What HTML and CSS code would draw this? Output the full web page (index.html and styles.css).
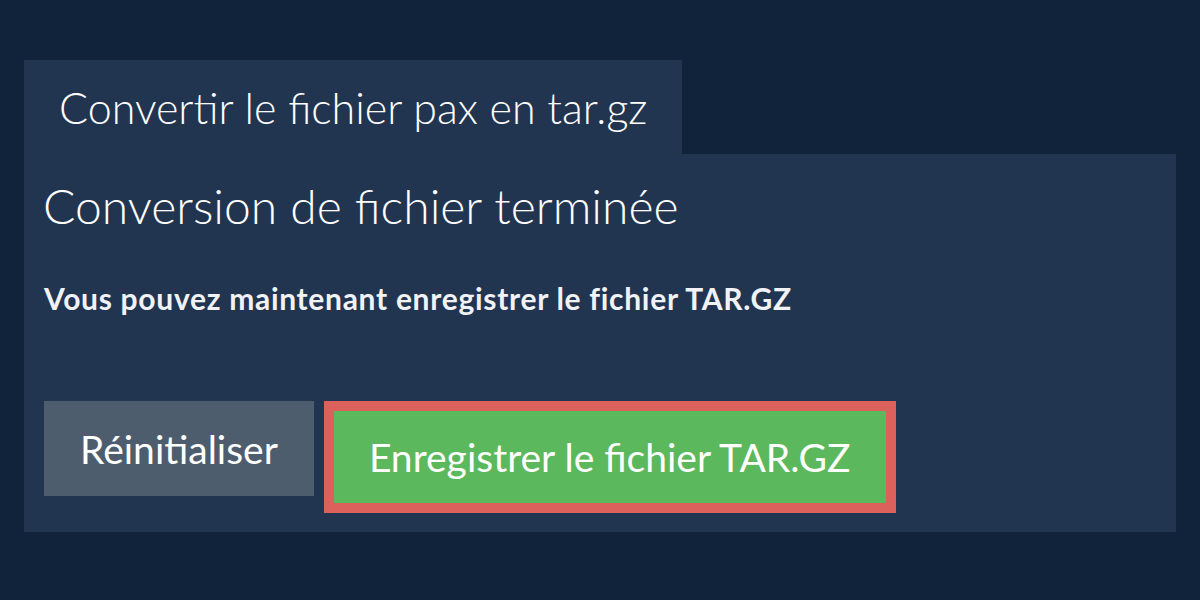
FILE: index.html
```html
<!DOCTYPE html>
<html lang="fr">
<head>
  <meta charset="UTF-8">
  <title>Convertir le fichier pax en tar.gz</title>
  <link rel="stylesheet" href="styles.css">
</head>
<body>
  <div class="converter">
    <div class="tab">Convertir le fichier pax en tar.gz</div>
    <div class="panel">
      <h2>Conversion de fichier terminée</h2>
      <p class="note">Vous pouvez maintenant enregistrer le fichier TAR.GZ</p>
      <div class="actions">
        <button class="btn btn-reset">Réinitialiser</button>
        <button class="btn btn-save">Enregistrer le fichier TAR.GZ</button>
      </div>
    </div>
  </div>
</body>
</html>
```

FILE: styles.css
```css
* { box-sizing: border-box; }
body {
  margin: 0;
  font-family: 'Lato', sans-serif;
  background: #11233a;
  color: #fff;
  padding: 60px 24px 0;
}
.converter {
  display: flex;
  flex-direction: column;
  align-items: flex-start;
}
.tab {
  background: #213550;
  height: 94px;
  padding: 0 35px;
  display: flex;
  align-items: center;
  font-size: 43px;
  font-weight: 300;
}
.panel {
  background: #213550;
  width: 100%;
  height: 378px;
  padding: 22px 20px 0;
}
.panel h2 {
  margin: 0 0 0 -1px;
  font-size: 48px;
  font-weight: 300;
  line-height: 60px;
}
.note {
  margin: 38px 0 0;
  font-size: 30px;
  font-weight: 700;
  letter-spacing: 0.7px;
  line-height: 48px;
  color: #f0f2f5;
}
.actions {
  display: flex;
  align-items: flex-start;
  gap: 10px;
  margin-top: 79px;
}
.btn {
  font-family: 'Lato', sans-serif;
  color: #fff;
  border: none;
  font-size: 39px;
  font-weight: 400;
  cursor: pointer;
}
.btn-reset {
  background: #4d5d6e;
  height: 95px;
  padding: 0 36px;
}
.btn-save {
  background: #5cb85c;
  height: 112px;
  padding: 0 35px;
  border: 10px solid #dc605c;
}
```
